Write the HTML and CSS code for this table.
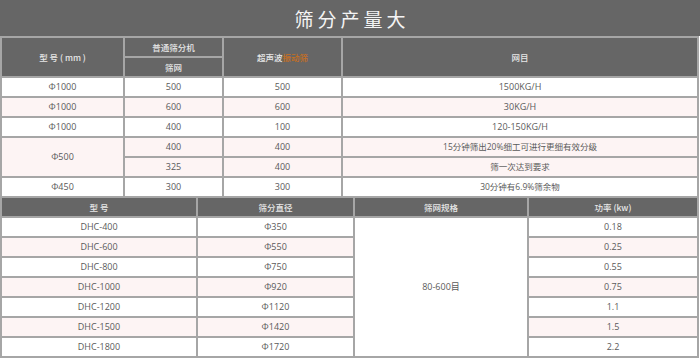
FILE: index.html
```html
<!DOCTYPE html>
<html lang="zh">
<head>
<meta charset="utf-8">
<title>筛分产量大</title>
<link rel="stylesheet" href="styles.css">
</head>
<body>
<div class="page">
  <h1 class="title">筛分产量大</h1>
  <table class="spec spec-a">
    <colgroup>
      <col class="a1"><col class="a2"><col class="a3"><col class="a4">
    </colgroup>
    <thead>
      <tr>
        <th rowspan="2">型 号 ( mm )</th>
        <th>普通筛分机</th>
        <th rowspan="2">超声波<span class="link">振动筛</span></th>
        <th rowspan="2">网目</th>
      </tr>
      <tr>
        <th>筛网</th>
      </tr>
    </thead>
    <tbody>
      <tr><td>Φ1000</td><td>500</td><td>500</td><td>1500KG/H</td></tr>
      <tr class="alt"><td>Φ1000</td><td>600</td><td>600</td><td>30KG/H</td></tr>
      <tr><td>Φ1000</td><td>400</td><td>100</td><td>120-150KG/H</td></tr>
      <tr class="alt"><td rowspan="2">Φ500</td><td>400</td><td>400</td><td class="cn">15分钟筛出20%细工可进行更细有效分级</td></tr>
      <tr class="alt"><td>325</td><td>400</td><td class="cn">筛一次达到要求</td></tr>
      <tr><td>Φ450</td><td>300</td><td>300</td><td class="cn">30分钟有6.9%筛余物</td></tr>
    </tbody>
  </table>
  <table class="spec spec-b">
    <colgroup>
      <col class="b1"><col class="b2"><col class="b3"><col class="b4">
    </colgroup>
    <thead>
      <tr><th>型 号</th><th>筛分直径</th><th>筛网规格</th><th>功率 (kw)</th></tr>
    </thead>
    <tbody>
      <tr><td>DHC-400</td><td>Φ350</td><td rowspan="7" class="plain">80-600目</td><td>0.18</td></tr>
      <tr class="alt"><td>DHC-600</td><td>Φ550</td><td>0.25</td></tr>
      <tr><td>DHC-800</td><td>Φ750</td><td>0.55</td></tr>
      <tr class="alt"><td>DHC-1000</td><td>Φ920</td><td>0.75</td></tr>
      <tr><td>DHC-1200</td><td>Φ1120</td><td>1.1</td></tr>
      <tr class="alt"><td>DHC-1500</td><td>Φ1420</td><td>1.5</td></tr>
      <tr><td>DHC-1800</td><td>Φ1720</td><td>2.2</td></tr>
    </tbody>
  </table>
</div>
</body>
</html>
```

FILE: styles.css
```css
html, body {
  margin: 0;
  padding: 0;
  background: #ffffff;
}

.page {
  width: 700px;
  font-family: "Open Sans", "Noto Sans CJK SC", sans-serif;
}

.title {
  margin: 0;
  height: 36px;
  line-height: 38px;
  background: #666666;
  color: #f4f4f4;
  text-align: center;
  font-family: "Noto Sans CJK SC", sans-serif;
  font-weight: 400;
  font-size: 19px;
  letter-spacing: 4px;
  text-indent: 4px;
}

.spec {
  width: 699px;
  table-layout: fixed;
  border-collapse: collapse;
  border: 2px solid #a6a6a6;
  font-size: 9px;
  color: #5a5a5a;
  text-align: center;
}

.spec-b {
  border-top: 0;
}

.spec-b thead th {
  border-top: 0;
}

.spec th,
.spec td {
  border: 2px solid #a6a6a6;
  padding: 0;
  height: 18px;
  line-height: 18px;
  font-weight: 400;
  white-space: nowrap;
  overflow: hidden;
}

.spec th {
  background: #666666;
  color: #e8e8e8;
  font-family: "Noto Sans CJK SC", sans-serif;
  font-size: 8.5px;
  font-weight: 500;
}

.spec td.cn {
  font-size: 8.5px;
}

.spec .alt td {
  background: #fdf4f4;
}

.spec .alt td.plain,
.spec td.plain {
  background: #ffffff;
}

.link {
  color: #c86f1e;
}

.a1 { width: 123px; }
.a2 { width: 99px; }
.a3 { width: 119px; }
.a4 { width: auto; }

.b1 { width: 196px; }
.b2 { width: 157px; }
.b3 { width: 174px; }
.b4 { width: auto; }
```
